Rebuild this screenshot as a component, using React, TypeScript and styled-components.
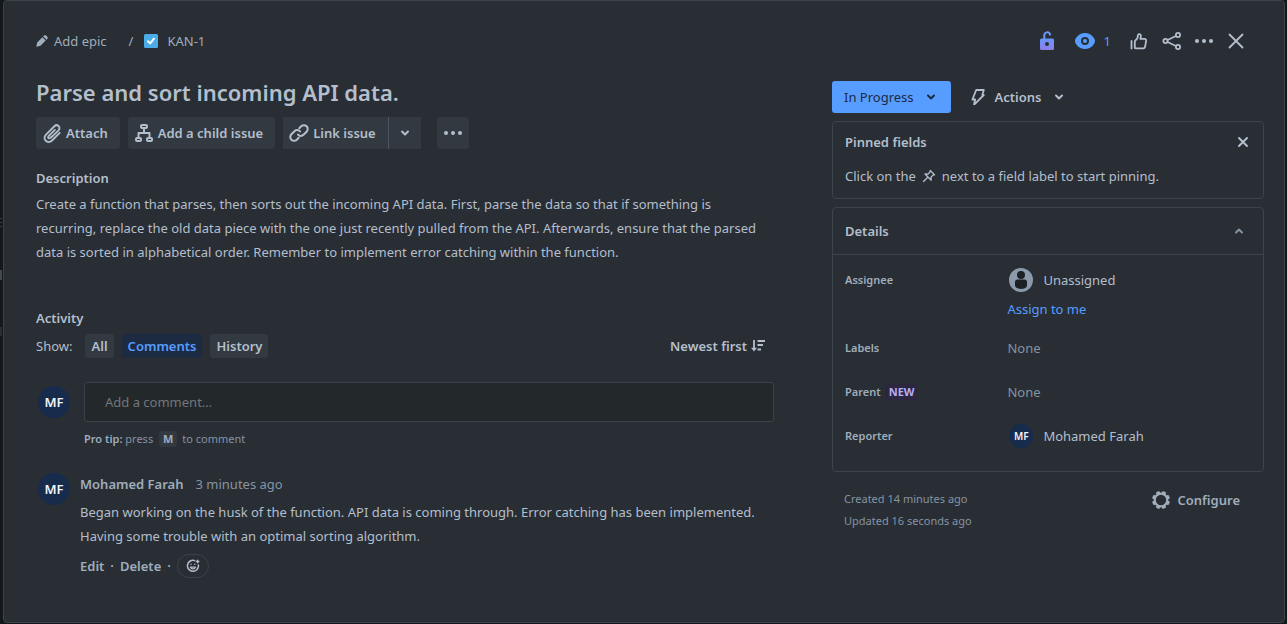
import React from "react";
import styled, { createGlobalStyle, css } from "styled-components";

const color = {
  page: "#14171b",
  surface: "#292d34",
  border: "#3b444b",
  fill: "#323940",
  input: "#23282b",
  text: "#b3bfcc",
  subtle: "#9fadbc",
  faint: "#8594a3",
  blue: "#579dff",
  navy: "#172b4d",
};

const GlobalStyle = createGlobalStyle`
  *, *::before, *::after { box-sizing: border-box; }
  body {
    margin: 0;
    background: ${color.page};
    color: ${color.text};
    font: 13px/20px "Noto Sans", "Open Sans", sans-serif;
  }
  button, input { font: inherit; color: inherit; }
  h1, h2, p, dl, dt, dd { margin: 0; }
`;

const Shell = styled.div`
  display: grid;
  grid-template-columns: 3px minmax(0, 1fr) 2px;
  min-height: 100vh;
  padding-bottom: 1px;
`;

const Gutter = styled.div`
  padding-top: 218px;
`;

const Sliver = styled.div<{ $height: number; $gap: number; $tone: string }>`
  width: 2px;
  height: ${(p) => p.$height}px;
  margin-bottom: ${(p) => p.$gap}px;
  background: ${(p) => p.$tone};
`;

const Dialog = styled.main`
  background: ${color.surface};
  border: 1px solid ${color.border};
  border-radius: 4px;
  padding: 24px 20px 44px 32px;
`;

const Header = styled.header`
  display: flex;
  align-items: center;
  justify-content: space-between;
  height: 32px;
`;

const Breadcrumbs = styled.nav`
  display: flex;
  align-items: center;
  color: ${color.subtle};
`;

const Crumb = styled.a`
  display: flex;
  align-items: center;
  gap: 6px;
  color: inherit;
  text-decoration: none;
`;

const Slash = styled.span`
  margin: 0 11px 0 22px;
`;

const KeyCrumb = styled(Crumb)`
  gap: 9px;
`;

const HeaderTools = styled.div`
  display: flex;
  align-items: center;
  padding-right: 16px;
`;

const Plain = styled.button`
  display: inline-flex;
  align-items: center;
  padding: 0;
  border: 0;
  background: none;
  cursor: pointer;
`;

const ToolButton = styled(Plain)`
  justify-content: center;
  width: 24px;
  height: 32px;
  margin-left: 8px;
  color: ${color.text};
`;

const LockButton = styled(ToolButton)`
  margin-right: 14px;
`;

const WatchButton = styled(Plain)`
  gap: 7px;
  height: 32px;
  margin-right: 9px;
  color: ${color.blue};
`;

const Columns = styled.div`
  display: grid;
  grid-template-columns: minmax(0, 41fr) minmax(0, 24fr);
  column-gap: 58px;
`;

const Content = styled.div`
  padding-top: 21px;
`;

const Title = styled.h1`
  font-size: 22px;
  line-height: 28px;
  font-weight: 600;
`;

const Toolbar = styled.div`
  display: flex;
  gap: 8px;
  margin-top: 11px;
`;

const FilledButton = styled.button<{ $square?: boolean }>`
  display: inline-flex;
  align-items: center;
  justify-content: center;
  gap: 2px;
  height: 32px;
  padding: ${(p) => (p.$square ? "0" : "0 12px 0 4px")};
  ${(p) => p.$square && css`width: 32px;`}
  border: 0;
  border-radius: 3px;
  background: ${color.fill};
  font-weight: 600;
  cursor: pointer;
`;

const SplitButton = styled.div`
  display: flex;
  gap: 1px;
  margin-right: 8px;
  border-radius: 3px;
  overflow: hidden;
  background: #4b5660;

  ${FilledButton} { border-radius: 0; }
`;

const SectionTitle = styled.h2`
  font-size: 13px;
  line-height: 20px;
  font-weight: 600;
`;

const Description = styled.section`
  margin-top: 19px;
`;

const Prose = styled.p`
  line-height: 24px;
`;

const DescriptionText = styled(Prose)`
  max-width: 724px;
  margin-top: 4px;
`;

const Activity = styled.section`
  margin-top: 44px;
`;

const FilterBar = styled.div`
  display: flex;
  align-items: center;
  gap: 8px;
  margin-top: 6px;
`;

const FilterLabel = styled.span`
  margin-right: 5px;
`;

const Filter = styled.button<{ $active?: boolean }>`
  height: 24px;
  padding: 0 6px;
  border: 0;
  border-radius: 3px;
  background: ${(p) => (p.$active ? "#1c2b42" : color.fill)};
  color: ${(p) => (p.$active ? color.blue : color.text)};
  font-weight: 600;
  line-height: 24px;
  cursor: pointer;
`;

const SortButton = styled(Plain)`
  gap: 4px;
  margin-left: auto;
  padding-right: 9px;
  font-weight: 600;
`;

const Avatar = styled.span<{ $small?: boolean }>`
  display: inline-flex;
  flex: none;
  align-items: center;
  justify-content: center;
  width: ${(p) => (p.$small ? 24 : 32)}px;
  height: ${(p) => (p.$small ? 24 : 32)}px;
  border-radius: 50%;
  background: ${color.navy};
  color: #f1f4f8;
  font-size: ${(p) => (p.$small ? 10 : 13)}px;
  font-weight: 600;
`;

const Composer = styled.div`
  display: flex;
  gap: 14px;
  margin-top: 24px;
  padding-left: 2px;

  ${Avatar} { margin-top: 4px; }
`;

const ComposerBody = styled.div`
  flex: 1;
  min-width: 0;
`;

const CommentInput = styled.input`
  display: block;
  width: 100%;
  height: 40px;
  padding: 0 20px;
  border: 1px solid #39424a;
  border-radius: 3px;
  background: ${color.input};

  &::placeholder { color: #737679; opacity: 1; }
`;

const Tip = styled.p`
  margin-top: 7px;
  font-size: 11px;
  color: ${color.faint};
`;

const Key = styled.kbd`
  display: inline-block;
  margin: 0 2px 0 3px;
  padding: 0 4px;
  border-radius: 3px;
  background: ${color.fill};
  color: ${color.subtle};
  font: 700 11px/16px "Noto Sans", "Open Sans", sans-serif;
`;

const Comment = styled.article`
  display: flex;
  gap: 10px;
  margin-top: 24px;
  padding-left: 2px;
`;

const CommentBody = styled.div`
  flex: 1;
  min-width: 0;
  padding-top: 1px;
`;

const CommentMeta = styled.div`
  display: flex;
  gap: 12px;
  margin-bottom: 6px;
  color: ${color.faint};
`;

const Author = styled.strong`
  font-weight: 600;
  color: ${color.subtle};
`;

const CommentActions = styled.div`
  display: flex;
  align-items: center;
  gap: 6px;
  margin-top: 6px;
  color: ${color.subtle};
  font-weight: 600;
`;

const ReactionButton = styled(Plain)`
  justify-content: center;
  width: 32px;
  height: 24px;
  border: 1px solid ${color.border};
  border-radius: 12px;
  color: ${color.text};
`;

const Side = styled.aside`
  padding-top: 24px;
`;

const StatusBar = styled.div`
  display: flex;
  align-items: center;
  gap: 19px;
`;

const StatusButton = styled(Plain)`
  gap: 9px;
  height: 32px;
  padding: 0 12px;
  border-radius: 3px;
  background: ${color.blue};
  color: #1d2b40;
`;

const ActionsButton = styled(Plain)`
  gap: 9px;
  height: 32px;
  font-weight: 600;
`;

const Panel = styled.section`
  margin-top: 8px;
  border: 1px solid ${color.border};
  border-radius: 4px;
`;

const PinnedPanel = styled(Panel)`
  padding: 10px 12px;
`;

const PanelHead = styled.div`
  display: flex;
  align-items: center;
  justify-content: space-between;
`;

const PinnedText = styled.p`
  display: flex;
  align-items: center;
  gap: 6px;
  margin-top: 12px;
  line-height: 24px;
`;

const DetailsHead = styled(PanelHead)`
  height: 47px;
  padding: 0 16px 0 12px;
  border-bottom: 1px solid ${color.border};
`;

const FadedButton = styled(Plain)`
  color: ${color.faint};
`;

const Fields = styled.dl`
  display: grid;
  grid-template-columns: minmax(0, 2fr) minmax(0, 3fr);
  row-gap: 20px;
  padding: 13px 12px 23px;
`;

const FieldName = styled.dt`
  display: flex;
  align-items: center;
  gap: 4px;
  height: 24px;
  font-size: 11px;
  font-weight: 600;
  color: ${color.subtle};
`;

const FieldValue = styled.dd<{ $empty?: boolean }>`
  line-height: 24px;
  color: ${(p) => (p.$empty ? color.faint : color.text)};
`;

const Person = styled.div`
  display: flex;
  align-items: center;
  gap: 10px;
  padding-left: 2px;
`;

const AssignLink = styled.a`
  display: block;
  margin-top: 10px;
  line-height: 14px;
  color: ${color.blue};
  text-decoration: none;
`;

const NewBadge = styled.span`
  padding: 0 4px;
  border-radius: 3px;
  background: #2b273f;
  color: #b8acf6;
  font-weight: 700;
  line-height: 16px;
`;

const SideFooter = styled.footer`
  display: flex;
  align-items: flex-start;
  justify-content: space-between;
  margin-top: 16px;
  padding: 0 24px 0 12px;
`;

const Dates = styled.div`
  font-size: 11px;
  line-height: 22px;
  color: ${color.faint};
`;

const ConfigureButton = styled(Plain)`
  gap: 6px;
  height: 24px;
  color: ${color.subtle};
  font-weight: 600;
`;

type IconProps = {
  size?: number;
  width?: number;
  box?: string;
  stroke?: number;
  children: React.ReactNode;
};

const Icon = ({ size = 24, width, box = "0 0 24 24", stroke = 2, children }: IconProps) => (
  <svg
    width={width ?? size}
    height={size}
    viewBox={box}
    fill="none"
    stroke="currentColor"
    strokeWidth={stroke}
    strokeLinecap="round"
    strokeLinejoin="round"
    aria-hidden="true"
  >
    {children}
  </svg>
);

const PencilIcon = () => (
  <Icon size={12} box="0 0 12 12" stroke={0}>
    <path fill="currentColor" d="M1.2 7.4 6.4 2.2l3.3 3.3-5.2 5.2-3.7 1a.4.4 0 0 1-.5-.5zM7.2 1.4l.8-.8a1.500 1.500 0 0 1 2.100 0l1.200 1.200a1.500 1.500 0 0 1 0 2.100l-.8.8z" />
  </Icon>
);

const TaskIcon = () => (
  <Icon size={14} box="0 0 14 14" stroke={0}>
    <rect width="14" height="14" rx="1.5" fill="#4bade8" />
    <path d="m4 7.3 2.2 2.1L10 4.7" stroke="#fff" strokeWidth="2" />
  </Icon>
);

const LockIcon = () => (
  <Icon>
    <defs>
      <linearGradient id="lock" x1="0" y1="0" x2="0" y2="1">
        <stop offset="0" stopColor="#6797f8" />
        <stop offset="1" stopColor="#8f7ee7" />
      </linearGradient>
    </defs>
    <path d="M9.3 10V6.2a2.9 2.9 0 0 1 5.7-.7v1" stroke="#6b9af7" strokeLinecap="butt" />
    <path fill="url(#lock)" stroke="none" fillRule="evenodd" d="M6.5 9.5h11A1.5 1.5 0 0 1 19 11v8.500a1.500 1.500 0 0 1-1.500 1.500h-11A1.500 1.500 0 0 1 5 19.500V11a1.500 1.500 0 0 1 1.500-1.500zM12 13a2 2 0 1 0 0 4 2 2 0 0 0 0-4z" />
  </Icon>
);

const EyeIcon = () => (
  <Icon stroke={0}>
    <path fill="currentColor" fillRule="evenodd" d="M12 4c6 0 10 5 10 8s-4 8-10 8S2 15 2 12s4-8 10-8zm0 4a4 4 0 1 0 0 8 4 4 0 0 0 0-8z" />
    <circle cx="12" cy="12" r="2" fill="currentColor" />
  </Icon>
);

const LikeIcon = () => (
  <Icon stroke={1.8}>
    <path d="M3.500 12v7.500" />
    <path d="M6.800 19v-6.200c0-.5.2-.9.500-1.200l1.600-1.800c.5-.6.700-1.200.800-1.900l.3-2.100c.2-1.100 2.700-1.100 2.900.7.100 1-.2 2-.6 3.300h4c1.300 0 2 .9 1.800 2l-1 6c-.2 1-.9 1.600-1.900 1.600H8.200c-.8 0-1.400-.2-1.400-.4z" />
  </Icon>
);

const ShareIcon = () => (
  <Icon stroke={1.800}>
    <circle cx="5.500" cy="12" r="2.100" />
    <circle cx="18" cy="6" r="2.100" />
    <circle cx="18" cy="18" r="2.100" />
    <path d="m7.600 11 8.300-4M7.600 13l8.300 4" />
  </Icon>
);

const MoreIcon = () => (
  <Icon stroke={0}>
    <circle cx="5" cy="12" r="2" fill="currentColor" />
    <circle cx="12" cy="12" r="2" fill="currentColor" />
    <circle cx="19" cy="12" r="2" fill="currentColor" />
  </Icon>
);

const CloseIcon = () => (
  <Icon stroke={1.800}>
    <path d="m5.500 5.500 13 13m0-13-13 13" />
  </Icon>
);

const AttachIcon = () => (
  <Icon stroke={1.900}>
    <path d="m11.600 16.200 6.900-6.900c2.900-2.900-1.200-6.900-4.100-4.100l-8.400 8.400c-4.300 4.300 1.700 10.100 6 5.900l7.700-7.700M14.900 8.900l-6.300 6.300c-1.300 1.300.4 2.900 1.700 1.700l1.300-1.300" />
  </Icon>
);

const ChildIcon = () => (
  <Icon stroke={2}>
    <rect x="9" y="4" width="6" height="3" rx="1" />
    <rect x="4" y="17" width="5" height="3" rx="1" />
    <rect x="15" y="17" width="5" height="3" rx="1" />
    <path d="M12 7v5M6.500 17v-5h11v5" />
  </Icon>
);

const LinkIcon = () => (
  <Icon stroke={2}>
    <path d="m12.300 7.200 1.900-1.900a3.800 3.800 0 0 1 5.400 5.400l-3.100 3.100a3.800 3.800 0 0 1-5.500-.2" />
    <path d="m11.700 16.800-1.900 1.900a3.800 3.800 0 0 1-5.400-5.400l3.100-3.100a3.800 3.800 0 0 1 5.500.2" />
  </Icon>
);

const ChevronIcon = ({ up }: { up?: boolean }) => (
  <Icon size={16} box="0 0 16 16">
    <path d={up ? "m5 9.500 3-3 3 3" : "m5 6.500 3 3 3-3"} />
  </Icon>
);

const BoltIcon = () => (
  <Icon size={16} box="0 0 16 16" stroke={1.800}>
    <path d="M6.200 1h7.600l-1.500 5h1.500L4 15.800l1.200-5.300H2.400z" />
  </Icon>
);

const SmallCloseIcon = () => (
  <Icon size={16} box="0 0 16 16">
    <path d="m4 4 8 8m0-8-8 8" />
  </Icon>
);

const PinIcon = () => (
  <Icon size={14} box="0 0 14 14" stroke={1.300}>
    <path d="m8.200 1.500 4.300 4.300-1.500.3-2 2.100.2 3L3 5l3 .1L8 3zM5.500 8.500 1.500 12.500" />
  </Icon>
);

const SortIcon = () => (
  <Icon size={12} width={14} box="0 0 14 12" stroke={1.800}>
    <path strokeLinecap="butt" d="M3 0v9M6.500 1H14M6.500 5H12M6.500 9.500H10" />
    <path fill="currentColor" stroke="none" d="M0 7.800h6L3 11.500z" />
  </Icon>
);

const ReactIcon = () => (
  <Icon size={14} box="0 0 14 14" stroke={1.500}>
    <path d="M8.800 1.600A5.500 5.500 0 1 0 12.400 6" />
    <path d="M4.400 8.200c.9 2.200 4.200 2.200 5.100 0z" strokeWidth="1.200" />
    <path d="M5 5.200v.2M8.800 5.200v.2M11.600 1.200v2.600M10.300 2.500h2.600" strokeWidth="1.300" />
  </Icon>
);

const GearIcon = () => (
  <Icon size={20} box="0 0 20 20" stroke={2.200}>
    <circle cx="10" cy="10" r="6.300" />
    <g fill="currentColor" stroke="none">
      {[22.5, 67.5, 112.5, 157.5, 202.5, 247.5, 292.5, 337.5].map((angle) => (
        <rect key={angle} x="8" y="1" width="4" height="3.500" rx="1" transform={`rotate(${angle} 10 10)`} />
      ))}
    </g>
  </Icon>
);

const UnassignedIcon = () => (
  <Icon stroke={0}>
    <circle cx="12" cy="12" r="12" fill="#8c9bab" />
    <circle cx="12" cy="7" r="4" fill="#1d2125" />
    <path fill="#1d2125" d="M6 14a2.500 2.500 0 0 1 2.500-2.500h7A2.500 2.500 0 0 1 18 14v3.500c0 4.500-12 4.500-12 0z" />
  </Icon>
);

const slivers = [
  { height: 1, gap: 3, tone: "#3a3f44" },
  { height: 1, gap: 3, tone: "#3a3f44" },
  { height: 1, gap: 43, tone: "#3a3f44" },
  { height: 10, gap: 47, tone: "#454a50" },
  { height: 9, gap: 0, tone: "#2a2e33" },
];

export default function App() {
  return (
    <>
      <GlobalStyle />
      <Shell>
        <Gutter aria-hidden="true">
          {slivers.map((s, i) => (
            <Sliver key={i} $height={s.height} $gap={s.gap} $tone={s.tone} />
          ))}
        </Gutter>
        <Dialog>
          <Header>
            <Breadcrumbs aria-label="Breadcrumbs">
              <Crumb href="#epic"><PencilIcon />Add epic</Crumb>
              <Slash>/</Slash>
              <KeyCrumb href="#KAN-1"><TaskIcon />KAN-1</KeyCrumb>
            </Breadcrumbs>
            <HeaderTools>
              <LockButton aria-label="Restrict access"><LockIcon /></LockButton>
              <WatchButton aria-label="Watchers"><EyeIcon />1</WatchButton>
              <ToolButton aria-label="Like"><LikeIcon /></ToolButton>
              <ToolButton aria-label="Share"><ShareIcon /></ToolButton>
              <ToolButton aria-label="More"><MoreIcon /></ToolButton>
              <ToolButton aria-label="Close"><CloseIcon /></ToolButton>
            </HeaderTools>
          </Header>

          <Columns>
            <Content>
              <Title>Parse and sort incoming API data.</Title>
              <Toolbar>
                <FilledButton><AttachIcon />Attach</FilledButton>
                <FilledButton><ChildIcon />Add a child issue</FilledButton>
                <SplitButton>
                  <FilledButton><LinkIcon />Link issue</FilledButton>
                  <FilledButton $square aria-label="Link options"><ChevronIcon /></FilledButton>
                </SplitButton>
                <FilledButton $square aria-label="More actions"><MoreIcon /></FilledButton>
              </Toolbar>

              <Description>
                <SectionTitle>Description</SectionTitle>
                <DescriptionText>
                  Create a function that parses, then sorts out the incoming API data. First, parse the data so that if
                  something is recurring, replace the old data piece with the one just recently pulled from the API.
                  Afterwards, ensure that the parsed data is sorted in alphabetical order. Remember to implement error
                  catching within the function.
                </DescriptionText>
              </Description>

              <Activity>
                <SectionTitle>Activity</SectionTitle>
                <FilterBar>
                  <FilterLabel>Show:</FilterLabel>
                  <Filter>All</Filter>
                  <Filter $active>Comments</Filter>
                  <Filter>History</Filter>
                  <SortButton>Newest first<SortIcon /></SortButton>
                </FilterBar>

                <Composer>
                  <Avatar>MF</Avatar>
                  <ComposerBody>
                    <CommentInput aria-label="Add a comment" placeholder="Add a comment…" />
                    <Tip><Author as="b">Pro tip:</Author> press <Key>M</Key> to comment</Tip>
                  </ComposerBody>
                </Composer>

                <Comment>
                  <Avatar>MF</Avatar>
                  <CommentBody>
                    <CommentMeta><Author>Mohamed Farah</Author><span>3 minutes ago</span></CommentMeta>
                    <Prose>
                      Began working on the husk of the function. API data is coming through. Error catching has been
                      implemented. Having some trouble with an optimal sorting algorithm.
                    </Prose>
                    <CommentActions>
                      <Plain>Edit</Plain>
                      <span>·</span>
                      <Plain>Delete</Plain>
                      <span>·</span>
                      <ReactionButton aria-label="Add reaction"><ReactIcon /></ReactionButton>
                    </CommentActions>
                  </CommentBody>
                </Comment>
              </Activity>
            </Content>

            <Side>
              <StatusBar>
                <StatusButton>In Progress<ChevronIcon /></StatusButton>
                <ActionsButton><BoltIcon />Actions<ChevronIcon /></ActionsButton>
              </StatusBar>

              <PinnedPanel>
                <PanelHead>
                  <SectionTitle>Pinned fields</SectionTitle>
                  <Plain aria-label="Dismiss"><SmallCloseIcon /></Plain>
                </PanelHead>
                <PinnedText>
                  <span>Click on the</span>
                  <PinIcon />
                  <span>next to a field label to start pinning.</span>
                </PinnedText>
              </PinnedPanel>

              <Panel>
                <DetailsHead>
                  <SectionTitle>Details</SectionTitle>
                  <FadedButton aria-label="Collapse details"><ChevronIcon up /></FadedButton>
                </DetailsHead>
                <Fields>
                  <FieldName>Assignee</FieldName>
                  <FieldValue>
                    <Person><UnassignedIcon />Unassigned</Person>
                    <AssignLink href="#assign">Assign to me</AssignLink>
                  </FieldValue>
                  <FieldName>Labels</FieldName>
                  <FieldValue $empty>None</FieldValue>
                  <FieldName>Parent <NewBadge>NEW</NewBadge></FieldName>
                  <FieldValue $empty>None</FieldValue>
                  <FieldName>Reporter</FieldName>
                  <FieldValue>
                    <Person><Avatar $small>MF</Avatar>Mohamed Farah</Person>
                  </FieldValue>
                </Fields>
              </Panel>

              <SideFooter>
                <Dates>
                  <p>Created 14 minutes ago</p>
                  <p>Updated 16 seconds ago</p>
                </Dates>
                <ConfigureButton><GearIcon />Configure</ConfigureButton>
              </SideFooter>
            </Side>
          </Columns>
        </Dialog>
      </Shell>
    </>
  );
}
